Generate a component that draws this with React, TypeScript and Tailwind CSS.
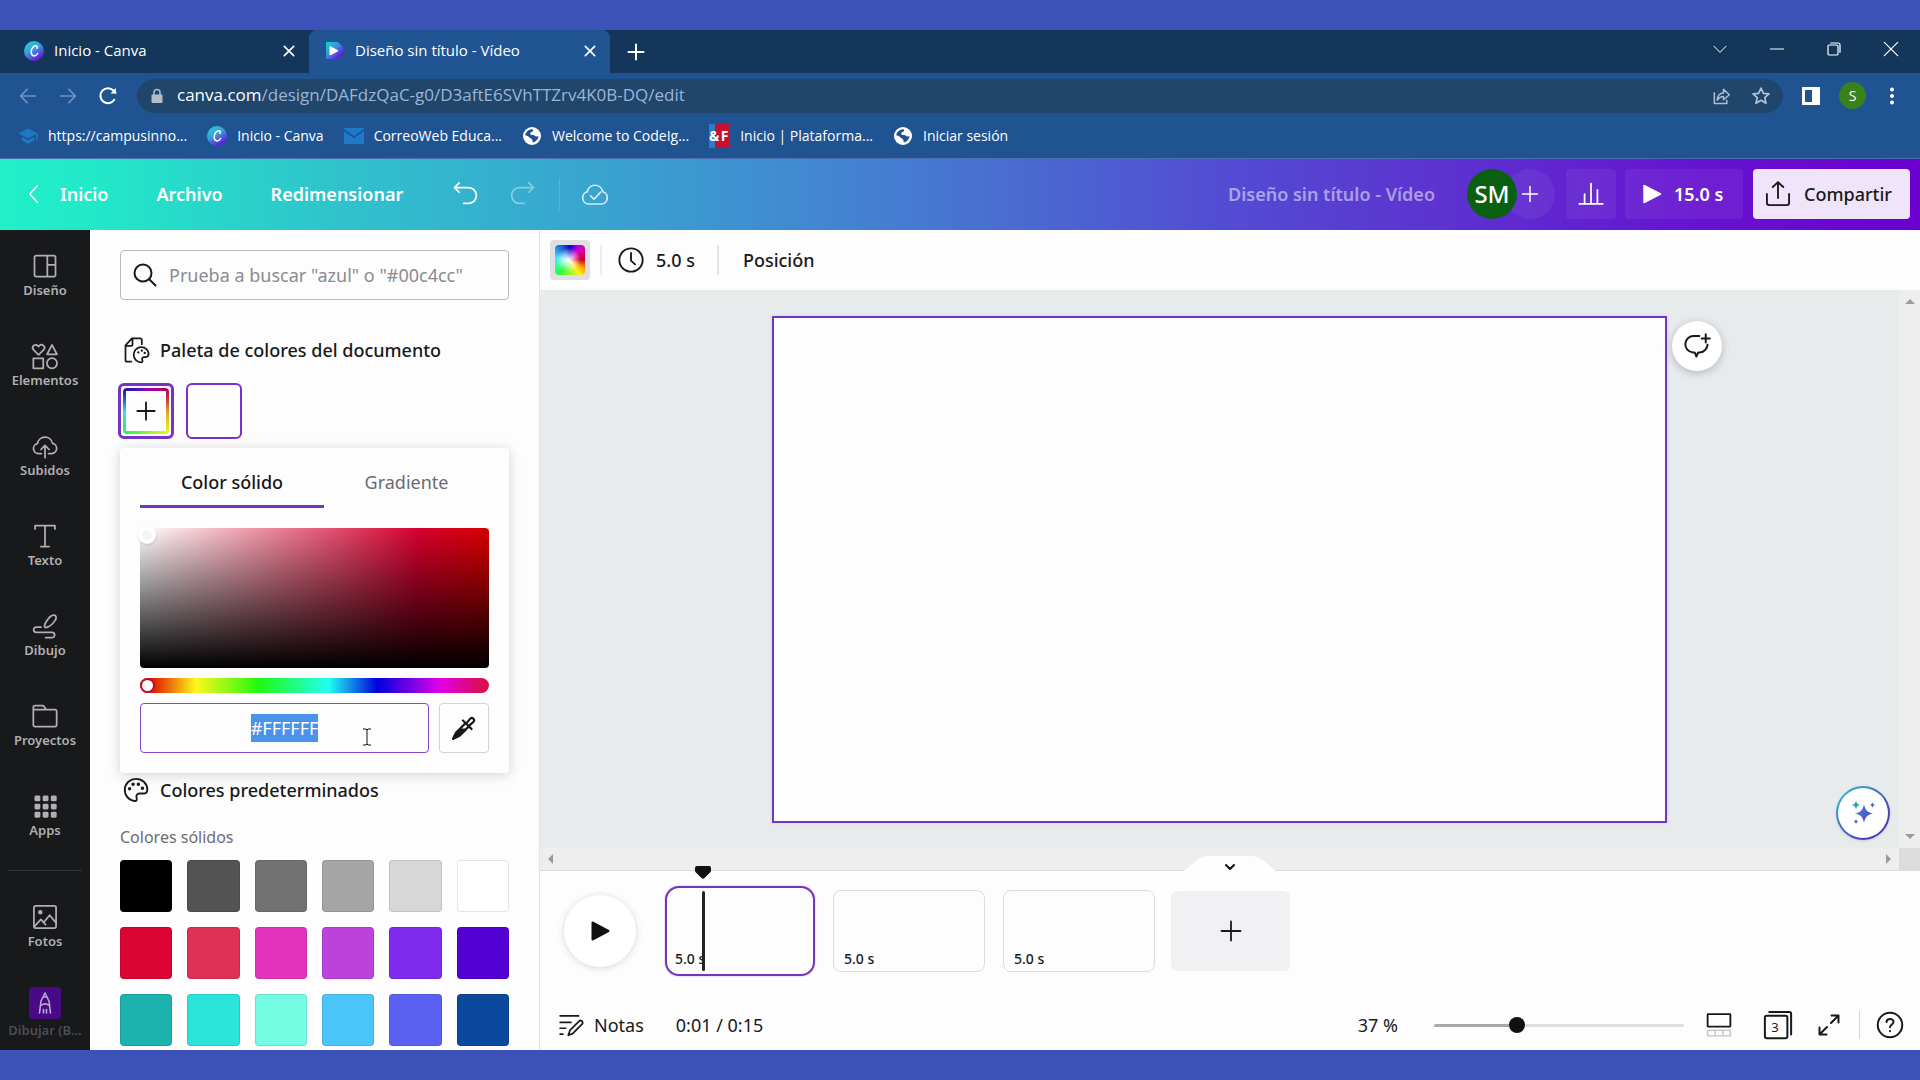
import React, { useEffect, useRef } from 'react';
import clsx from 'clsx';

type IconProps = {
  className?: string;
  sw?: number;
  children: React.ReactNode;
};

const Icon: React.FC<IconProps> = ({ className = 'size-7', sw = 1.5, children }) => (
  <svg
    className={clsx('shrink-0', className)}
    viewBox="0 0 24 24"
    fill="none"
    stroke="currentColor"
    strokeWidth={sw}
    strokeLinecap="round"
    strokeLinejoin="round"
    aria-hidden="true"
  >
    {children}
  </svg>
);

/* ---------- Browser chrome ---------- */

const CanvaLogo: React.FC<{ id: string }> = ({ id }) => (
  <svg className="size-5 shrink-0" viewBox="0 0 20 20" aria-hidden="true">
    <defs>
      <linearGradient id={id} x1="0" y1="0" x2="0.6" y2="1">
        <stop offset="0" stopColor="#22d3d6" />
        <stop offset="0.5" stopColor="#3aa0dc" />
        <stop offset="1" stopColor="#6414dc" />
      </linearGradient>
    </defs>
    <circle cx="10" cy="10" r="10" fill={`url(#${id})`} />
    <path
      d="M12.9 7.3c.6-.5.8-2.3-.9-2.5-2.4-.2-4.7 2.9-4.8 6-.1 2.5 1.1 4.1 2.9 4.1 1.5 0 2.7-1 3.5-2.4"
      fill="none"
      stroke="#fff"
      strokeWidth="1.5"
      strokeLinecap="round"
    />
  </svg>
);

const VideoLogo = () => (
  <svg className="size-5 shrink-0" viewBox="0 0 20 20" aria-hidden="true">
    <defs>
      <linearGradient id="video-logo" x1="0" y1="0" x2="1" y2="1">
        <stop offset="0.1" stopColor="#18c8cc" />
        <stop offset="0.45" stopColor="#3c8ce0" />
        <stop offset="0.8" stopColor="#6218dc" />
      </linearGradient>
    </defs>
    <path d="M1 1h12l6 6v5l-7 6H1z" fill="url(#video-logo)" />
    <path d="M5 5.5v8.500l8-4.200z" fill="#fff" stroke="#fff" strokeLinejoin="round" />
  </svg>
);

const Globe = () => (
  <svg className="size-5 shrink-0" viewBox="0 0 20 20" aria-hidden="true">
    <circle cx="10" cy="10" r="9" fill="#fff" />
    <path
      d="M8.500 3.500c2-.8 3 .2 2.500 1.500-.6 1.200-2.500 1-2.800 2.400-.2 1.200 1 1.500 2.800 1.500 2 0 2 1.500 3.500 1.600 1 .1 1.500-.5 2-.5-.2 3-2.200 5.600-5.500 6.400-.7-.9-.2-1.900-.9-2.900-.9-1.200-2.500-1.400-3.500-2.800C5.800 9.500 4 9.600 3.200 8.900 3.700 6.400 6 4.200 8.500 3.500z"
      fill="#1f5192"
    />
  </svg>
);

const Cap = () => (
  <svg className="size-5 shrink-0" viewBox="0 0 20 20" fill="#2079c0" aria-hidden="true">
    <path d="M10 2.500 0.500 7.500 10 12.500l8-4.200V14h1.500V7.500z" />
    <path d="M4 11v3.500l6 3.500 6-3.500V11l-6 3.200z" />
  </svg>
);

const Mail = () => (
  <svg className="size-5 shrink-0" viewBox="0 0 20 20" aria-hidden="true">
    <path d="M0 2h20v16H0z" fill="#1f78c8" />
    <path d="m0 4 10 7 10-7" fill="none" stroke="#1a58a0" strokeWidth="2" />
  </svg>
);

const Innova = () => (
  <span className="flex h-6 w-[21px] shrink-0 text-sm leading-6 font-bold text-white">
    <span className="flex w-2.5 justify-center bg-[linear-gradient(90deg,#2b7cc0_60%,#c8102e_60%)]">&amp;</span>
    <span className="flex w-[11px] justify-center bg-[#c8102e]">F</span>
  </span>
);

type TabProps = { icon: React.ReactNode; label: string; active?: boolean };

const BrowserTab: React.FC<TabProps> = ({ icon, label, active }) => (
  <div
    className={clsx(
      'flex w-[301px] items-center gap-2.5 pr-3 pb-px pl-4 text-[15px] text-white',
      active && 'rounded-t-lg bg-[#215493]'
    )}
  >
    {icon}
    <span className="flex-1 truncate">{label}</span>
    <button aria-label="Cerrar pestaña">
      <Icon className="size-4" sw={2.5}>
        <path d="M5 5l14 14M19 5 5 19" />
      </Icon>
    </button>
  </div>
);

const bookmarks = [
  { label: 'https://campusinno...', icon: <Cap /> },
  { label: 'Inicio - Canva', icon: <CanvaLogo id="canva-bm" /> },
  { label: 'CorreoWeb Educa...', icon: <Mail /> },
  { label: 'Welcome to CodeIg...', icon: <Globe /> },
  { label: 'Inicio | Plataforma...', icon: <Innova /> },
  { label: 'Iniciar sesión', icon: <Globe /> },
];

const BrowserChrome = () => (
  <div className="shrink-0 bg-[#205392] font-['Open_Sans',sans-serif] text-white">
    <div className="flex h-[43px] items-stretch bg-[#14365b] pl-2">
      <BrowserTab icon={<CanvaLogo id="canva-tab" />} label="Inicio - Canva" />
      <BrowserTab icon={<VideoLogo />} label="Diseño sin título - Vídeo" active />
      <button className="ml-4" aria-label="Nueva pestaña">
        <Icon className="size-5" sw={2.4}>
          <path d="M12 3v18M3 12h18" />
        </Icon>
      </button>
      <div className="ml-auto flex items-center gap-[41px] pr-[21px] pb-1.5">
        <button aria-label="Buscar pestañas">
          <Icon className="size-4" sw={1.5}><path d="m3 8 9 9 9-9" /></Icon>
        </button>
        <button aria-label="Minimizar">
          <Icon className="size-4" sw={1.5}><path d="M2 12h20" /></Icon>
        </button>
        <button aria-label="Restaurar">
          <Icon className="size-4" sw={1.8}>
            <rect x="3" y="6" width="15" height="15" rx="2" />
            <path d="M7 3h11a3 3 0 0 1 3 3v11" />
          </Icon>
        </button>
        <button aria-label="Cerrar">
          <Icon className="size-4" sw={1.8}><path d="M2 2l20 20M22 2 2 22" /></Icon>
        </button>
      </div>
    </div>

    <div className="flex h-[45px] items-center px-[18px]">
      <div className="flex items-center gap-5">
        <button className="text-[#6f92c0]" aria-label="Atrás">
          <Icon className="size-5" sw={2}><path d="M21 12H3M11 4l-8 8 8 8" /></Icon>
        </button>
        <button className="text-[#6f92c0]" aria-label="Adelante">
          <Icon className="size-5" sw={2}><path d="M3 12h18M13 4l8 8-8 8" /></Icon>
        </button>
        <button aria-label="Recargar">
          <Icon className="size-5" sw={2.5}>
            <path d="M19.500 16.500A9 9 0 1 1 18.500 5.500L21 8" />
            <path d="M21.500 2.500v6.500H15z" fill="currentColor" stroke="none" />
          </Icon>
        </button>
      </div>
      <div className="ml-[19px] flex h-[34px] flex-1 items-center rounded-full bg-[#20466b] px-3">
        <svg className="size-4 shrink-0" viewBox="0 0 16 16" fill="#b4bcc6" aria-hidden="true">
          <rect x="2.500" y="6.500" width="11" height="8.500" rx="1" />
          <path d="M5 7V4.500a3 3 0 0 1 6 0V7" fill="none" stroke="#b4bcc6" strokeWidth="1.5" />
        </svg>
        <span className="ml-3 text-[17px] text-[#9db4d8]">
          <span className="text-white">canva.com</span>
          /design/DAFdzQaC-g0/D3aftE6SVhTTZrv4K0B-DQ/edit
        </span>
        <button className="ml-auto text-[#a9bdd4]" aria-label="Compartir página">
          <Icon className="size-5" sw={1.8}>
            <path d="M4 8v13h15v-4" />
            <path d="M7.500 17C8 11 11 8.500 15 8.500V4l7 6.500-7 6v-4c-3.500 0-5.500 1.500-7.500 4.500z" />
          </Icon>
        </button>
        <button className="ml-5 text-[#b4c4d8]" aria-label="Añadir a marcadores">
          <Icon className="size-5" sw={2}>
            <path d="m12 2.500 2.900 6.300 6.600.7-5 4.500 1.500 6.700-6-3.500-6 3.500L7.500 14l-5-4.500 6.600-.7z" />
          </Icon>
        </button>
      </div>
      <button className="ml-[18px]" aria-label="Panel lateral">
        <svg className="size-5" viewBox="0 0 20 20" aria-hidden="true">
          <path d="M1 1h18v18H1zM4 4v12h7V4z" fill="#fff" fillRule="evenodd" />
        </svg>
      </button>
      <button className="ml-[18px] size-[27px] rounded-full bg-[#38811b] text-sm">S</button>
      <button className="ml-4" aria-label="Menú">
        <svg className="size-5" viewBox="0 0 20 20" fill="#fff" aria-hidden="true">
          <circle cx="10" cy="3.500" r="2" />
          <circle cx="10" cy="10" r="2" />
          <circle cx="10" cy="16.500" r="2" />
        </svg>
      </button>
    </div>

    <nav className="flex h-[41px] items-center gap-5 border-b border-[#4a6fae] pb-1 pl-[18px]">
      {bookmarks.map((b) => (
        <a key={b.label} href="#" className="flex items-center gap-2.5 text-sm whitespace-nowrap">
          {b.icon}
          {b.label}
        </a>
      ))}
    </nav>
  </div>
);

/* ---------- Editor header ---------- */

const EditorHeader = () => (
  <header className="flex h-[71px] shrink-0 items-center bg-[linear-gradient(90deg,#20f0c8_0%,#22e8c8_5%,#2fc4cc_17%,#3a9fd0_33%,#4481d0_45%,#4a6bd0_53%,#534bd3_64%,#5c33d0_75%,#6614d0_88%,#6b00cf_100%)] pr-2.5 pb-0.5 pl-6 text-lg font-semibold text-white">
    <a href="#" className="flex items-center gap-4">
      <Icon className="size-5" sw={1.8}><path d="m16 2-9 10 9 10" /></Icon>
      Inicio
    </a>
    <button className="ml-12">Archivo</button>
    <button className="ml-12">Redimensionar</button>
    <button className="ml-12" aria-label="Deshacer">
      <Icon className="size-7">
        <path d="M7 2.500 3 6.500l4 4M3 6.500h12a6 6 0 0 1 0 13.500h-4" />
      </Icon>
    </button>
    <button className="ml-[30px] text-white/40" aria-label="Rehacer">
      <Icon className="size-7">
        <path d="m17 2.500 4 4-4 4M21 6.500H9a6 6 0 0 0 0 13.500h4" />
      </Icon>
    </button>
    <span className="ml-[22px] h-8 w-px bg-white/15" />
    <span className="ml-5 text-white/80">
      <Icon className="size-[30px]" sw={1.3}>
        <path d="M7 20a5 5 0 0 1-1.200-9.800 6.300 6.300 0 0 1 12.400 0A5 5 0 0 1 17 20z" />
        <path d="m8.500 13.500 2.700 2.700 5.300-5.700" />
      </Icon>
    </span>

    <span className="ml-auto text-white/50">Diseño sin título - Vídeo</span>
    <div className="ml-8 flex items-center">
      <span className="z-10 flex size-[50px] items-center justify-center rounded-full bg-[#0a6010] text-2xl font-medium">
        SM
      </span>
      <button
        className="-ml-3 flex size-[50px] items-center justify-center rounded-full bg-white/6"
        aria-label="Añadir miembros"
      >
        <Icon className="size-[18px]" sw={2}><path d="M12 2v20M2 12h20" /></Icon>
      </button>
    </div>
    <button
      className="ml-[11px] flex size-[50px] items-center justify-center rounded bg-white/6"
      aria-label="Estadísticas"
    >
      <Icon className="size-7">
        <path d="M2 20.500h20M6.500 20V12M12 20V3M17.500 20V8.500" />
      </Icon>
    </button>
    <button className="ml-[9px] flex h-[50px] w-[118px] items-center gap-3 rounded bg-white/6 pl-[17px]">
      <svg className="size-5" viewBox="0 0 20 20" aria-hidden="true">
        <path d="M2 1.500v17L18.500 10z" fill="#fff" stroke="#fff" strokeWidth="1.5" strokeLinejoin="round" />
      </svg>
      15.0 s
    </button>
    <button className="ml-2.5 flex h-[50px] w-[157px] items-center gap-3 rounded bg-[#efe4fa] pl-[11px] font-medium text-[#18191b]">
      <Icon className="size-7" sw={1.6}>
        <path d="M12 15.500V2M7.500 6 12 1.800 16.500 6M2.500 12v7.500a2 2 0 0 0 2 2h15a2 2 0 0 0 2-2V12" />
      </Icon>
      Compartir
    </button>
  </header>
);

/* ---------- Left rail ---------- */

const railItems = [
  {
    label: 'Diseño',
    icon: <path d="M3 4.500A1.500 1.500 0 0 1 4.500 3h15A1.500 1.500 0 0 1 21 4.500v15a1.500 1.500 0 0 1-1.500 1.500h-15A1.500 1.500 0 0 1 3 19.500zM14 3v18M14 11h7" />,
  },
  {
    label: 'Elementos',
    icon: (
      <>
        <path d="M6.500 11 2.200 6.700a2.500 2.500 0 0 1 3.600-3.500l.7.700.7-.7a2.500 2.500 0 0 1 3.600 3.500zM18 2.500l4.200 8h-8.400z" />
        <rect x="2" y="14" width="8.500" height="8.500" />
        <circle cx="18" cy="18.200" r="4.300" />
      </>
    ),
  },
  {
    label: 'Subidos',
    icon: <path d="M9 18.500H6.500a4.300 4.300 0 0 1-1-8.500 6.600 6.600 0 0 1 13-.2 4.400 4.400 0 0 1-.8 8.700H15M12 22V11.500M8.500 15 12 11.500l3.500 3.500" />,
  },
  {
    label: 'Texto',
    icon: <path d="M3.500 6V3h17v3M12 3v18M8.500 21h7" />,
  },
  {
    label: 'Dibujo',
    icon: (
      <>
        <path d="M11.500 12.500c0-3 4.500-9.500 7.800-9.800 2.500-.2 2.700 2.400 1.500 4.300-1.500 2.500-5 6-8.300 6.300z" />
        <path d="M8.500 13H4.500a2.200 2.200 0 0 0 0 4.400h13.500a2.200 2.200 0 0 1 0 4.500h-5.500" />
      </>
    ),
  },
  {
    label: 'Proyectos',
    icon: <path d="M2 19.500v-15A1.500 1.500 0 0 1 3.500 3h7L13 6.500h7.500A1.500 1.500 0 0 1 22 8v11.500a1.500 1.500 0 0 1-1.500 1.500h-17A1.500 1.500 0 0 1 2 19.500zM2 6.500h11" />,
  },
  {
    label: 'Apps',
    icon: (
      <g fill="currentColor" stroke="none">
        {[3, 10, 17].map((y) => [3, 10, 17].map((x) => <rect key={`${x}-${y}`} x={x} y={y} width="5" height="5" rx="1.2" />))}
      </g>
    ),
  },
];

const RailButton: React.FC<{ label: string; children: React.ReactNode }> = ({ label, children }) => (
  <button className="flex h-[90px] w-full shrink-0 flex-col items-center justify-center gap-px text-[13px] leading-[18px] font-semibold text-[#b0b0b2]">
    {children}
    {label}
  </button>
);

const Rail = () => (
  <nav className="flex w-[90px] shrink-0 flex-col overflow-hidden bg-[#18191b]">
    {railItems.map((item) => (
      <RailButton key={item.label} label={item.label}>
        <Icon>{item.icon}</Icon>
      </RailButton>
    ))}
    <hr className="mx-2 my-2.5 border-[#35363a]" />
    <RailButton label="Fotos">
      <Icon>
        <rect x="2.500" y="2.500" width="19" height="19" rx="1.500" />
        <circle cx="8" cy="8" r="1.200" fill="currentColor" />
        <path d="m3 20 5.500-6 4 4.500M11 16.500l5-6 5.500 6.500" />
      </Icon>
    </RailButton>
    <button className="mt-4 flex shrink-0 flex-col items-center gap-0.5 text-[13px] leading-[18px] font-semibold text-[#4c4d51]">
      <span className="flex size-8 items-center justify-center rounded bg-[#480a86] text-[#b9a8cc]">
        <Icon className="size-6" sw={1.6}>
          <path d="M6.500 22 8 10l4-8 4 8 1.500 12M8 14.500c2.500-2 5.500-2 8 0M10.500 18.500V22M13.500 18.500V22M10.500 6h3" />
        </Icon>
      </span>
      Dibujar (B...
    </button>
  </nav>
);

/* ---------- Colour panel ---------- */

const solidColors = [
  'bg-[#000000]', 'bg-[#535353]', 'bg-[#727272]', 'bg-[#a5a5a5]', 'bg-[#d7d7d7]', 'bg-white',
  'bg-[#dc0433]', 'bg-[#e03055]', 'bg-[#e433bd]', 'bg-[#bb43dc]', 'bg-[#802aee]', 'bg-[#5200d4]',
  'bg-[#1cb3ae]', 'bg-[#2be4da]', 'bg-[#74fde3]', 'bg-[#4cc6fa]', 'bg-[#5a61f2]', 'bg-[#0b499e]',
];

const ColorPicker = () => {
  const hexRef = useRef<HTMLInputElement>(null);

  useEffect(() => {
    hexRef.current?.focus();
    hexRef.current?.select();
  }, []);

  return (
    <div className="relative mt-[9px] rounded bg-[#fdfdfd] px-5 pb-5 shadow-[0_2px_12px_rgba(60,60,70,0.22)]">
      <div className="flex h-[60px]" role="tablist">
        <button role="tab" aria-selected="true" className="w-[184px] border-b-[3px] border-[#7038c0] pt-2.5 font-medium">
          Color sólido
        </button>
        <button role="tab" aria-selected="false" className="flex-1 border-b-[3px] border-transparent pt-2.5 text-[#6b6c70]">
          Gradiente
        </button>
      </div>
      <div className="relative mt-5 h-[140px] rounded bg-[linear-gradient(0deg,#000,transparent),linear-gradient(90deg,#fff,#d6002e_80%,#d60000)]">
        <span className="absolute -top-0.5 -left-0.5 size-[18px] rounded-full border-4 border-white bg-[#f4f4f4] shadow" />
      </div>
      <input
        type="range"
        min={0}
        max={360}
        defaultValue={0}
        aria-label="Tono"
        className="mt-2.5 block h-[15px] w-full appearance-none rounded-full bg-[linear-gradient(90deg,#c8002a_0%,#e02000_4%,#fff81a_16%,#20f810_34%,#20fff0_54%,#0000e0_68%,#e000e8_86%,#d8103c_100%)] [&::-webkit-slider-thumb]:size-[15px] [&::-webkit-slider-thumb]:appearance-none [&::-webkit-slider-thumb]:rounded-full [&::-webkit-slider-thumb]:border-2 [&::-webkit-slider-thumb]:border-[#b81028] [&::-webkit-slider-thumb]:bg-white"
      />
      <div className="mt-2.5 flex h-[50px] gap-2.5">
        <input
          ref={hexRef}
          defaultValue="#FFFFFF"
          aria-label="Código hexadecimal"
          className="w-0 flex-1 rounded border border-[#8448c8] text-center text-lg outline-none selection:bg-[#4b92ea] selection:text-white"
        />
        <button className="flex w-[50px] items-center justify-center rounded border border-[#d4d4d8]" aria-label="Cuentagotas">
          <Icon className="size-[26px]" sw={2}>
            <path d="M13.500 7.500 5 16l-3 6 6-3 8.500-8.500" />
            <path d="m11 5 8 8M14 8l3.800-4.600a2 2 0 0 1 2.900 2.900L16 10.500" />
            <path d="M8.500 13.500 5 16l-3 6 6-3 5.500-5.500z" fill="currentColor" />
          </Icon>
        </button>
      </div>
      {/* text cursor over the hex field */}
      <svg className="absolute top-[280px] left-60 h-[18px] w-3.5" viewBox="0 0 14 18" fill="none" stroke="#111" aria-hidden="true">
        <path d="M3 1h3l1 1 1-1h3M3 17h3l1-1 1 1h3M7 2v14" />
      </svg>
    </div>
  );
};

const ColorPanel = () => (
  <aside className="w-[450px] shrink-0 overflow-hidden border-r border-[#e2e2e4] bg-[#fdfdfd] px-[30px] pt-5">
    <label className="flex h-[50px] items-center gap-3 rounded border border-[#b8b9bd] px-3">
      <Icon className="size-6" sw={2}>
        <circle cx="10" cy="10" r="8.500" />
        <path d="m16.500 16.500 6 6" />
      </Icon>
      <input
        type="search"
        aria-label="Buscar colores"
        placeholder={'Prueba a buscar "azul" o "#00c4cc"'}
        className="w-0 flex-1 outline-none placeholder:text-[#8a8b90]"
      />
    </label>

    <h2 className="mt-9 flex h-7 items-center gap-2.5 pl-0.5 font-medium">
      <Icon>
        <path d="M8 22H4.500A1.500 1.500 0 0 1 3 20.500V8l5.500-6h7A1.500 1.500 0 0 1 17 3.500V7M3.500 8.500H8a1 1 0 0 0 1-1V2.500" />
        <path d="M16.500 9.500a6.500 6.500 0 0 0 0 13c1.500 0 1.200-1.300.8-2.200-.4-1.200.4-2.300 1.700-2.300h1.500c1.600 0 2.300-1 2.300-2.500 0-3.400-2.800-6-6.300-6z" />
        <path d="M14 14h.01M17 12.500h.01M19.500 14.500h.01" strokeWidth="2" />
      </Icon>
      Paleta de colores del documento
    </h2>
    <div className="-mx-0.5 mt-[19px] flex gap-3">
      <button className="size-14 rounded-md border-[3px] border-[#7434c4] p-0.5" aria-label="Añadir un color">
        <span className="block size-full rounded-sm bg-[conic-gradient(from_45deg,#b8005a,#e0a020,#e8f020_25%,#30f060_50%,#30e0f8_62%,#2018b0_75%,#a000b8_90%,#b8005a)] p-[3px]">
          <span className="flex size-full items-center justify-center bg-[#fdfdfd]">
            <Icon className="size-[22px]" sw={2}><path d="M12 2.500v19M2.500 12h19" /></Icon>
          </span>
        </span>
      </button>
      <button className="size-14 rounded-md border-2 border-[#7a30cc]" aria-label="Blanco" />
    </div>

    <ColorPicker />

    <h2 className="mt-[3px] flex h-7 items-center gap-2.5 pl-0.5 font-medium">
      <Icon className="size-7" sw={1.6}>
        <path d="M12 2.500a9.500 9.500 0 0 0-1.500 18.900c2.200.3 2.500-1.200 2-2.700-.7-2 .5-3.700 2.500-3.700h3.500c2.200 0 3.200-1.500 3.200-3.500 0-5-4.300-9-9.700-9z" />
        <path d="M9.500 7h.01M14 7h.01M17.500 10.500h.01M6.500 11h.01" strokeWidth="3" />
      </Icon>
      Colores predeterminados
    </h2>
    <h3 className="mt-5 h-7 text-base leading-[26px] text-[#6c6d72]">Colores sólidos</h3>
    <div className="mt-2 grid grid-cols-6 gap-[15px]">
      {solidColors.map((color) => (
        <button key={color} aria-label="Color" className={clsx('h-[52px] rounded border border-black/10', color)} />
      ))}
    </div>
  </aside>
);

/* ---------- Stage and timeline ---------- */

const ScrollArrow: React.FC<{ d: string }> = ({ d }) => (
  <svg className="size-2.5" viewBox="0 0 10 10" fill="#9a9b9d" aria-hidden="true">
    <path d={d} />
  </svg>
);

const Toolbar = () => (
  <div className="flex h-[60px] shrink-0 items-center bg-[#fdfdfd] pl-2.5 font-medium">
    <button className="size-10 rounded bg-[#dfdfe3] p-[5px]" aria-label="Color de fondo">
      <span className="block size-full rounded-sm bg-[radial-gradient(circle_at_45%_50%,#fff,transparent_55%),conic-gradient(from_45deg,#e000b8,#c8002a_12%,#ffb000_22%,#f8f020_28%,#30f840_48%,#30ff90_55%,#40e8f8_65%,#0808c0_87%,#a000d8_95%,#e000b8)]" />
    </button>
    <span className="ml-2.5 h-[30px] w-0.5 bg-[#ececee]" />
    <button className="ml-[15px] flex items-center gap-[11px]">
      <Icon sw={1.6}>
        <circle cx="12" cy="12" r="10" />
        <path d="M12 6v6.500l3.500 3.200" />
      </Icon>
      5.0 s
    </button>
    <span className="ml-[22px] h-[30px] w-0.5 bg-[#e4e4e6]" />
    <button className="ml-6">Posición</button>
  </div>
);

const Stage = () => (
  <div className="flex min-h-0 flex-1 flex-col">
    <div className="flex min-h-0 flex-1">
      <div className="relative flex flex-1 justify-center bg-[#e8ebec] pt-[26px] pb-[25px]">
        <div className="relative aspect-[30/17] h-full border-2 border-[#7038c0] bg-[#fdfdfd] shadow-[0_0_3px_#d8c0f8]">
          <button
            className="absolute top-[3px] left-full ml-[7px] flex size-[50px] items-center justify-center rounded-full bg-white shadow-[0_2px_8px_rgba(60,60,80,0.3)]"
            aria-label="Añadir comentario"
          >
            <Icon className="size-7" sw={1.7}>
              <path d="M14 3.500h-4.500a7 7 0 0 0-1 14h1.500l1.500 3.500 1.500-3.500h1.500a7 7 0 0 0 6.500-6.500" />
              <path d="M19.500 2v7M16 5.500h7" />
            </Icon>
          </button>
        </div>
        <button
          className="absolute right-[9px] bottom-2 flex size-[54px] items-center justify-center rounded-full bg-[linear-gradient(135deg,#2cc8c8,#4a50c8_60%,#5a20b0)] p-0.5 shadow"
          aria-label="Asistente"
        >
          <span className="flex size-full items-center justify-center rounded-full bg-white">
            <svg className="size-7" viewBox="0 0 28 28" aria-hidden="true">
              <defs>
                <linearGradient id="spark" x1="0" y1="0" x2="1" y2="1">
                  <stop offset="0" stopColor="#2c9cc8" />
                  <stop offset="1" stopColor="#6a30c8" />
                </linearGradient>
              </defs>
              <path d="M15 5c1.200 6 3 8 9 9.500-6 1.500-7.800 3.500-9 9.500-1.200-6-3-8-9-9.500 6-1.500 7.800-3.500 9-9.500z" fill="url(#spark)" />
              <path d="M7 1.500c.7 3 1.500 3.800 4.500 4.500-3 .7-3.800 1.500-4.500 4.500C6.300 7.500 5.500 6.700 2.500 6 5.500 5.300 6.300 4.500 7 1.500z" fill="#2aa8a8" />
              <path d="M23.500 3c.4 2 1 2.600 3 3-2 .4-2.600 1-3 3-.4-2-1-2.600-3-3 2-.4 2.600-1 3-3z" fill="#4a68b8" />
              <path d="M7 20c.4 1.800.9 2.200 2.500 2.500-1.600.3-2.100.7-2.500 2.500-.4-1.800-.9-2.200-2.500-2.500C6.100 22.200 6.600 21.800 7 20z" fill="#4a4f98" />
            </svg>
          </span>
        </button>
      </div>
      <div className="flex w-[21px] flex-col items-center justify-between bg-[#eeeeee] py-1.5">
        <ScrollArrow d="M0 8 5 3l5 5z" />
        <ScrollArrow d="M0 2h10L5 7z" />
      </div>
    </div>
    <div className="flex h-[22px] shrink-0 bg-[#eeeeee]">
      <div className="flex flex-1 items-center justify-between px-1.5">
        <ScrollArrow d="M7 0v10L2 5z" />
        <ScrollArrow d="M3 0v10l5-5z" />
      </div>
      <div className="w-[21px] bg-[#dcdcdc]" />
    </div>
  </div>
);

const Timeline = () => (
  <div className="relative shrink-0 border-t border-[#dcdcde] bg-[#fdfdfd]">
    <button className="absolute -top-4 left-1/2 -ml-[54px]" aria-label="Ocultar línea de tiempo">
      <svg className="h-[18px] w-[108px]" viewBox="0 0 108 18" fill="none" aria-hidden="true">
        <path d="M0 18c14 0 16-17 34-17h40c18 0 20 17 34 17z" fill="#fdfdfd" />
        <path d="m50 10 4 4 4-4" stroke="#111" strokeWidth="2" strokeLinecap="round" strokeLinejoin="round" />
      </svg>
    </button>

    <div className="flex items-center gap-[18px] pt-[15px] pl-6">
      <button
        className="mr-[11px] flex size-[72px] items-center justify-center rounded-full bg-white shadow-[0_1px_7px_rgba(60,60,80,0.2)]"
        aria-label="Reproducir"
      >
        <svg className="size-5" viewBox="0 0 20 20" aria-hidden="true">
          <path d="M2.500 1.500v17L18.500 10z" fill="#111" stroke="#111" strokeWidth="2" strokeLinejoin="round" />
        </svg>
      </button>
      <button className="relative flex h-[90px] w-[150px] items-end rounded-[14px] border-2 border-[#7038b8] bg-[#fdfdfd] px-2 pb-[5px] text-sm font-medium shadow-[0_0_2px_#d0a8f0]">
        5.0 s
        <span className="absolute top-[3px] left-[35px] h-20 w-[3px] rounded-full bg-[#222326]" />
        <svg className="absolute -top-[22px] left-7 h-[13px] w-4" viewBox="0 0 16 13" fill="#111" aria-hidden="true">
          <path d="M2 0h12a2 2 0 0 1 2 2v2.500c0 1-.5 1.500-1.200 2.200L9.500 12c-1 1-2 1-3 0L1.200 6.700C.5 6 0 5.500 0 4.500V2a2 2 0 0 1 2-2z" />
        </svg>
      </button>
      {['2', '3'].map((page) => (
        <button
          key={page}
          aria-label={`Página ${page}`}
          className="flex h-[82px] w-[152px] items-end rounded-lg border border-[#dcdde0] px-2.5 pb-0.5 text-sm font-medium"
        >
          5.0 s
        </button>
      ))}
      <button className="-ml-0.5 flex h-20 w-[119px] items-center justify-center rounded-md bg-[#f1f1f3]" aria-label="Añadir página">
        <Icon className="size-6" sw={1.8}><path d="M12 2.500v19M2.500 12h19" /></Icon>
      </button>
    </div>

    <div className="flex h-[74px] items-center pt-6 pr-4 pl-[18px]">
      <button className="flex items-center gap-2.5">
        <Icon className="size-[26px]" sw={1.6}>
          <path d="M2 3.500h17M2 9.500h10M2 15h5M2 20.500h2.500" />
          <path d="m11 17 8.500-8.500a1.800 1.800 0 0 1 2.700 2.700L13.500 20l-4 1.500z" />
        </Icon>
        Notas
      </button>
      <span className="ml-8">0:01 / 0:15</span>
      <div className="ml-auto flex items-center">
        <label htmlFor="zoom">37 %</label>
        <input
          id="zoom"
          type="range"
          min={0}
          max={100}
          defaultValue={32}
          className="ml-9 h-[3px] w-[250px] appearance-none rounded-full bg-[linear-gradient(90deg,#a8a8aa_33%,#dedee0_33%)] [&::-webkit-slider-thumb]:size-4 [&::-webkit-slider-thumb]:appearance-none [&::-webkit-slider-thumb]:rounded-full [&::-webkit-slider-thumb]:bg-[#111]"
        />
        <button className="ml-[22px]" aria-label="Vista de miniaturas">
          <Icon className="size-[26px]" sw={1.7}>
            <rect x="1.500" y="2" width="21" height="11.500" rx="0.500" />
            <path d="M1.500 17h21v5h-21zM8.500 17v5M15.500 17v5" stroke="#c4c4c8" strokeWidth="1.300" />
          </Icon>
        </button>
        <button className="relative ml-[31px] size-[30px] pt-1 pr-1.5 text-[13px]" aria-label="Páginas: 3">
          <Icon className="absolute inset-0 size-[30px]" sw={1.6}>
            <rect x="1.500" y="4.500" width="18" height="18" rx="1.500" />
            <path d="M5 1.500h16a1.500 1.500 0 0 1 1.500 1.500v16.500" />
          </Icon>
          3
        </button>
        <button className="ml-6" aria-label="Pantalla completa">
          <Icon className="size-6" sw={2}>
            <path d="M14.500 2.500h7v7M21 3l-7 7M9.500 21.500h-7v-7M3 21l7-7" />
          </Icon>
        </button>
        <span className="ml-[18px] h-7 w-px bg-[#d4d4d8]" />
        <button className="ml-4" aria-label="Ayuda">
          <Icon className="size-7" sw={1.7}>
            <circle cx="12" cy="12" r="10.500" />
            <path d="M9 9.500C9.200 6 15 6 15 9.500c0 2-3 2.200-3 4.500M12 17.200v.1" />
          </Icon>
        </button>
      </div>
    </div>
  </div>
);

const App: React.FC = () => (
  <div className="flex h-screen flex-col overflow-hidden bg-[#3d52b8] py-[30px] font-['Noto_Sans',sans-serif] text-lg text-[#18191b]">
    <BrowserChrome />
    <EditorHeader />
    <div className="flex min-h-0 flex-1">
      <Rail />
      <ColorPanel />
      <main className="flex min-w-0 flex-1 flex-col">
        <Toolbar />
        <Stage />
        <Timeline />
      </main>
    </div>
  </div>
);

export default App;
